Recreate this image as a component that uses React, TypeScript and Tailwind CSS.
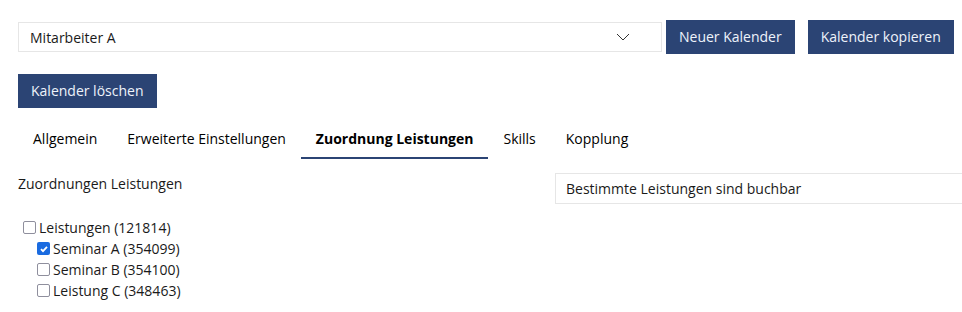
import { useState } from "react";

const tabs = ["Allgemein", "Erweiterte Einstellungen", "Zuordnung Leistungen", "Skills", "Kopplung"];

const children = [
  { id: "354099", label: "Seminar A (354099)", checked: true },
  { id: "354100", label: "Seminar B (354100)", checked: false },
  { id: "348463", label: "Leistung C (348463)", checked: false },
];

function Button({ children }: { children: React.ReactNode }) {
  return (
    <button className="h-[34px] shrink-0 whitespace-nowrap bg-[#2b4474] px-[13px] text-[14px] text-[#eef3fb] leading-none">
      {children}
    </button>
  );
}

function Box({ checked, onClick }: { checked: boolean; onClick?: () => void }) {
  return (
    <span
      onClick={onClick}
      className={`ml-[5px] mr-[3px] flex h-[13px] w-[13px] shrink-0 items-center justify-center rounded-[2px] ${
        checked ? "bg-[#1a6be0]" : "border-[1.5px] border-[#8f8f9d] bg-white"
      }`}
    >
      {checked && (
        <svg width="10" height="10" viewBox="0 0 10 10" fill="none" stroke="white" strokeWidth="1.8">
          <path d="M2 5.2l2 2 4-4.4" />
        </svg>
      )}
    </span>
  );
}

export default function App() {
  const [active, setActive] = useState(2);
  const [items, setItems] = useState(children);
  const [parent, setParent] = useState(false);

  const toggle = (id: string) =>
    setItems((list) => list.map((i) => (i.id === id ? { ...i, checked: !i.checked } : i)));

  return (
    <div
      className="w-[962px] h-[312px] overflow-hidden bg-white pl-[18px] pt-[20px] text-[14px] text-[#1a1a1a]"
      style={{ fontFamily: '"Open Sans", "Liberation Sans", sans-serif' }}
    >
      {/* Top row */}
      <div className="flex items-center">
        <div className="flex h-[30px] w-[644px] shrink-0 items-center justify-between border border-[#e6e6e6] pl-[11px] pr-[31px]">
          <span>Mitarbeiter A</span>
          <svg width="14" height="8" viewBox="0 0 14 8" fill="none" stroke="#333" strokeWidth="1">
            <path d="M1 1l6 6 6-6" />
          </svg>
        </div>
        <div className="ml-[4px]">
          <Button>Neuer Kalender</Button>
        </div>
        <div className="ml-[13px]">
          <Button>Kalender kopieren</Button>
        </div>
      </div>

      <div className="mt-[20px]">
        <Button>Kalender löschen</Button>
      </div>

      {/* Tabs */}
      <div className="mt-[10px] flex">
        {tabs.map((t, i) => (
          <button
            key={t}
            onClick={() => setActive(i)}
            className={`px-[15px] pt-[10px] pb-[8px] leading-[21px] border-b-2 whitespace-nowrap ${
              active === i ? "border-[#2b4474] font-bold text-black" : "border-transparent text-black"
            }`}
          >
            {t}
          </button>
        ))}
      </div>

      {/* Assignment row */}
      <div className="mt-[14px] flex">
        <div className="w-[537px] shrink-0 leading-[21px]">Zuordnungen Leistungen</div>
        <div className="flex h-[31px] w-[420px] shrink-0 items-center border border-[#e6e6e6] pl-[10px]">
          Bestimmte Leistungen sind buchbar
        </div>
      </div>

      {/* Tree */}
      <div className="mt-[13px] leading-[21px]">
        <div className="flex items-center">
          <Box checked={parent} onClick={() => setParent(!parent)} />
          <span>Leistungen (121814)</span>
        </div>
        {items.map((c) => (
          <div key={c.id} className="flex items-center pl-[14px]">
            <Box checked={c.checked} onClick={() => toggle(c.id)} />
            <span>{c.label}</span>
          </div>
        ))}
      </div>
    </div>
  );
}
